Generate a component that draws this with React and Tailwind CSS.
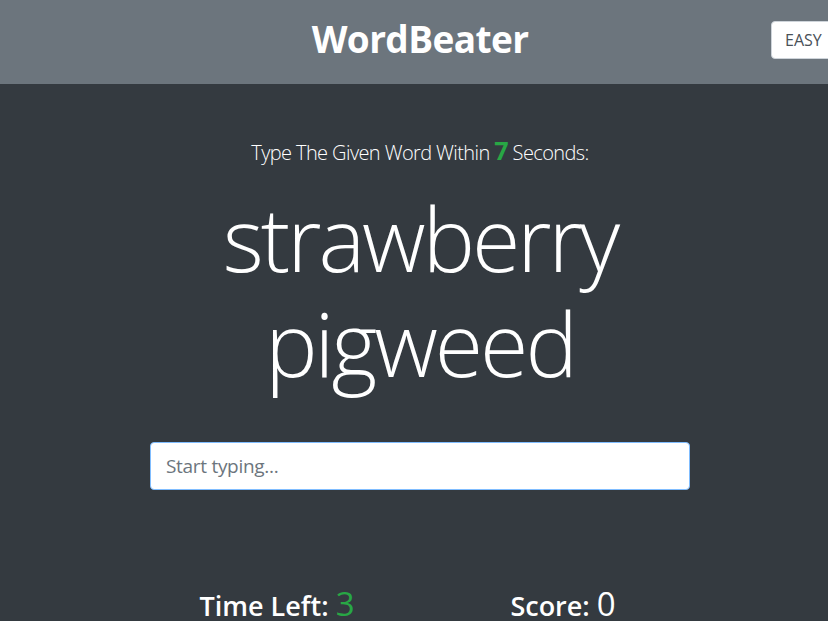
import React, { useState } from 'react';

const App = () => {
    const [typed, setTyped] = useState('');

    return (
        <div className="h-[621px] overflow-hidden bg-[#343a40] text-white font-['Open_Sans','Noto_Sans',sans-serif]">
            {/* HEADER */}
            <header className="relative h-[84px] bg-[#6c757d] flex items-center">
                <div className="ml-[134px] w-[572px] text-center -mt-[6px]">
                    <h1 className="text-[37px] leading-[48px] font-bold tracking-[-0.6px]">WordBeater</h1>
                </div>
                <div className="absolute left-[771px] top-[21px] w-[80px] h-[38px] bg-white rounded-[4px] border border-[#ced4da] flex items-center pl-[13px] text-[16px] text-[#495057]">
                    EASY
                </div>
            </header>

            {/* MAIN */}
            <main className="ml-[134px] w-[572px] flex flex-col items-center">
                <p className="mt-[54px] h-[30px] text-[20px] leading-[30px] font-light tracking-[-0.6px]">
                    Type The Given Word Within <span className="text-[25px] leading-none font-bold text-[#28a745]">7</span> Seconds:
                </p>

                <h2 className="mt-[18px] h-[210px] text-[88px] leading-[105px] font-light text-center tracking-[-3px]">
                    strawberry pigweed
                </h2>

                <input
                    type="text"
                    value={typed}
                    onChange={e => setTyped(e.target.value)}
                    placeholder="Start typing..."
                    className="mt-[46px] w-[540px] h-[48px] px-[15px] bg-white rounded-[4px] border border-[#80bdff] text-[19px] text-[#495057] placeholder:text-[#6c757d] outline-none tracking-[-0.3px]"
                />

                <div className="mt-[94px] w-full grid grid-cols-2 text-[27px] leading-[40px] font-semibold">
                    <h3 className="text-center">Time Left: <span className="text-[33px] font-normal text-[#28a745]">3</span></h3>
                    <h3 className="text-center">Score: <span className="text-[33px] font-normal">0</span></h3>
                </div>
            </main>
        </div>
    );
};

export default App;
